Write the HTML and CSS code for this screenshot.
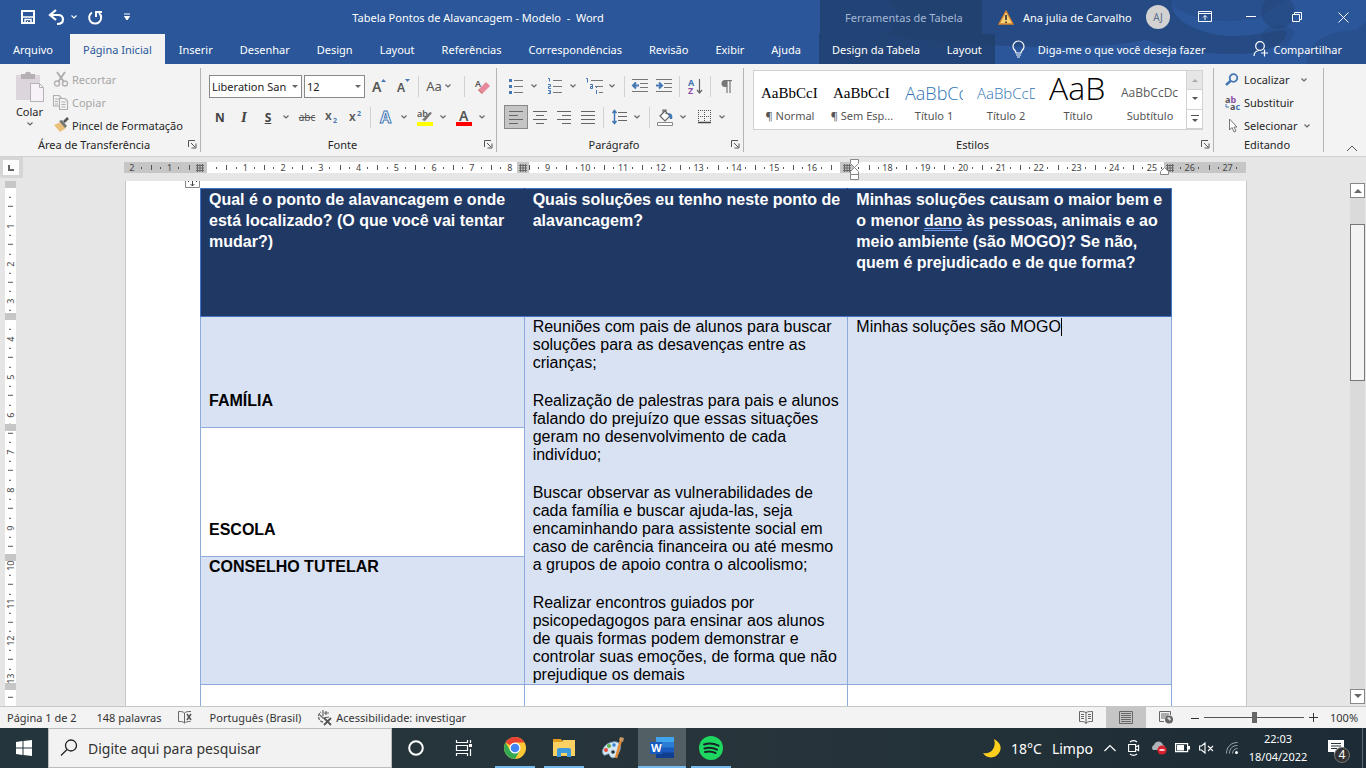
FILE: index.html
```
<!DOCTYPE html>
<html lang="pt-BR">
<head>
    <meta charset="UTF-8">
    <meta name="viewport" content="width=device-width, initial-scale=1.0">
    <title>Tabela Pontos de Alavancagem - Modelo - Word</title>
    <link rel="stylesheet" href="styles.css">
</head>
<body>
    <svg class="defs" aria-hidden="true">
        <symbol id="chev" viewBox="0 0 12 8"><path d="M3.5 2.500 6 5l2.500-2.500" fill="none" stroke="currentColor" stroke-width="1.200"/></symbol>
        <symbol id="launch" viewBox="0 0 9 9"><path d="M.5 7V.500H7M3 3l4 4M8 3.500V8H3.500" fill="none" stroke="#555"/></symbol>
        <symbol id="grid" viewBox="0 0 8 8"><path d="M1.500 0v8M4 0v8M6.500 0v8M0 1.500h8M0 4h8M0 6.500h8" stroke="#666" fill="none"/></symbol>
    </svg>

    <!-- Barra de título e guias -->
    <header class="header">
        <svg class="art" viewBox="0 0 500 64" preserveAspectRatio="none" aria-hidden="true">
            <path d="M20 0h285c0 20 20 28 42 34 28 6 60-4 73-4 4 10-14 25-55 24-35 0-60-6-85-14-60 12-150 8-260-4 10-8 18-26 0-36z" fill="#234273" opacity=".55"/>
            <circle cx="412" cy="12" r="17" fill="#234273" opacity=".45"/>
            <path d="M300 0h120l-28 18c-40 8-75 0-92-18zM395 34c6-12 30-12 34 0l-8 12h-20zM440 64c0-20 20-34 50-34l10-8v42z" fill="#234273" opacity=".3"/>
        </svg>
        <div class="titlebar">
            <div class="quick">
                <button aria-label="Salvar"><svg width="14" height="14" viewBox="0 0 14 14"><path d="M1 1h12v12H1z" fill="none" stroke="#fff" stroke-width="2"/><path d="M1 7h12M4 13V9.500h6V13" stroke="#fff" stroke-width="1.500" fill="none"/><path d="M6 11h1v3H6z" fill="#fff"/></svg></button>
                <button class="undo" aria-label="Desfazer"><svg width="16" height="15" viewBox="0 0 16 15"><path d="M7 0 1 5l6 5M2 5h7c4 0 5 2 5 4.500S12 14 8 14" fill="none" stroke="#fff" stroke-width="2.200"/></svg><svg width="12" height="8"><use href="#chev"/></svg></button>
                <button aria-label="Repetir"><svg width="15" height="15" viewBox="0 0 15 15"><path d="M4 2.500A6 6 0 1 0 11 3M8 7V2h6" fill="none" stroke="#fff" stroke-width="2"/></svg></button>
                <button aria-label="Personalizar"><svg width="8" height="8" viewBox="0 0 8 8"><path d="M1 1h6M1.500 3.500h5L4 7z" stroke="#fff" fill="#fff"/></svg></button>
            </div>
            <div class="title">Tabela Pontos de Alavancagem - Modelo&nbsp; -&nbsp; Word</div>
            <div class="context-title">Ferramentas de Tabela</div>
            <div class="account">
                <svg width="16" height="15" viewBox="0 0 16 15"><path d="M8 1 15 14H1z" fill="#f7d277" stroke="#d9822b" stroke-width="1.300"/><path d="M8 5v5M8 11.500V13" stroke="#222" stroke-width="1.500"/></svg>
                <span class="user">Ana julia de Carvalho</span>
                <span class="avatar">AJ</span>
            </div>
            <div class="window">
                <button aria-label="Opções da faixa"><svg width="14" height="12" viewBox="0 0 14 12"><path d="M.5.500h13v10H.500zM.5 2.500h13M7 9V4.500M5 6.500l2-2 2 2" fill="none" stroke="#fff"/></svg></button>
                <button aria-label="Minimizar"><svg width="10" height="10"><path d="M0 4.500h10" stroke="#fff"/></svg></button>
                <button aria-label="Restaurar"><svg width="10" height="10"><path d="M.5 2.500h7v7h-7zM2.500 2.500v-2h7v7h-2" fill="none" stroke="#fff"/></svg></button>
                <button aria-label="Fechar"><svg width="11" height="11"><path d="m.5.500 10 10m0-10-10 10" stroke="#fff"/></svg></button>
            </div>
        </div>
        <nav class="tabs">
            <button class="tab file">Arquivo</button>
            <button class="tab active">Página Inicial</button>
            <button class="tab">Inserir</button>
            <button class="tab">Desenhar</button>
            <button class="tab">Design</button>
            <button class="tab">Layout</button>
            <button class="tab">Referências</button>
            <button class="tab">Correspondências</button>
            <button class="tab">Revisão</button>
            <button class="tab">Exibir</button>
            <button class="tab">Ajuda</button>
            <div class="context-tabs">
                <button class="tab">Design da Tabela</button>
                <button class="tab">Layout</button>
            </div>
            <button class="tell"><svg width="13" height="17" viewBox="0 0 13 17"><path d="M4 12c0-3-3-3-3-6.500a5.500 5.500 0 0 1 11 0C12 9 9 9 9 12zM4 14h5M5 16h3" fill="none" stroke="#fff" stroke-width="1.200"/></svg>Diga-me o que você deseja fazer</button>
            <button class="share"><svg width="16" height="16" viewBox="0 0 16 16"><circle cx="7" cy="5" r="4.300" fill="none" stroke="#fff" stroke-width="1.200"/><path d="M1 15c0-3 2-5 5-5.500M11.500 8.500v7M8 12h7" fill="none" stroke="#fff" stroke-width="1.200"/></svg>Compartilhar</button>
        </nav>
    </header>

    <!-- Faixa de opções -->
    <section class="ribbon">
        <div class="group clipboard">
            <div class="group-body">
                <button class="paste">
                    <svg width="30" height="31" viewBox="0 0 30 31"><path d="M1 3h24v25H1z" fill="#dcd6dc"/><path d="M6 2h4c0-3 6-3 6 0h4v5H6z" fill="#b5b1b5"/><path d="M15.500 11.500h9l4 4v14h-13z" fill="#f7f1f8" stroke="#b5b1b5"/><path d="M24.500 11.500v4h4" fill="none" stroke="#b5b1b5"/></svg>
                    Colar
                    <svg width="12" height="8"><use href="#chev"/></svg>
                </button>
                <div class="stack">
                    <button class="line" disabled><svg width="16" height="15" viewBox="0 0 16 15"><path d="m4 0 7 10M12 0 5 10" stroke="#aaa" stroke-width="1.800"/><circle cx="4" cy="11.500" r="2.500" fill="none" stroke="#b5b1b5" stroke-width="1.400"/><circle cx="12" cy="11.500" r="2.500" fill="none" stroke="#b5b1b5" stroke-width="1.400"/></svg>Recortar</button>
                    <button class="line" disabled><svg width="16" height="15" viewBox="0 0 16 15"><path d="M6 11H.500V.500H6L8.500 3M2 4h4M2 6.500h3M2 9h3M6.500 3.500H12L14.500 6v8.500h-8zM8.500 7h4M8.500 9.500h4M8.500 12h4" fill="none" stroke="#b0aeb0" stroke-width="1.100"/></svg>Copiar</button>
                    <button class="line"><svg width="16" height="15" viewBox="0 0 16 15"><path d="m1 7 7-3 5 6-6 4z" fill="#ebc07a"/><path d="m6 3 3-1 5 6-2 2z" fill="#777"/><path d="m11 4 4-4" stroke="#555" stroke-width="2.500"/></svg>Pincel de Formatação</button>
                </div>
            </div>
            <div class="group-foot"><span>Área de Transferência</span><button aria-label="Abrir área de transferência"><svg width="9" height="9"><use href="#launch"/></svg></button></div>
        </div>

        <div class="group font">
            <div class="group-body rows">
                <div class="row">
                    <span class="combo family"><select aria-label="Fonte"><option>Liberation San</option></select></span>
                    <span class="combo size"><select aria-label="Tamanho"><option>12</option></select></span>
                    <button class="tool" aria-label="Aumentar"><svg width="16" height="16" viewBox="0 0 16 16"><text x="1" y="14" class="glyph big">A</text><path d="m10 4 2.500-3L15 4z" fill="#4478b4"/></svg></button>
                    <button class="tool" aria-label="Diminuir"><svg width="16" height="16" viewBox="0 0 16 16"><text x="2" y="14" class="glyph">A</text><path d="m10 1 2.500 3L15 1z" fill="#4478b4"/></svg></button>
                    <i class="sep"></i>
                    <button class="tool split case">Aa<svg width="12" height="8"><use href="#chev"/></svg></button>
                    <i class="sep"></i>
                    <button class="tool eraser" aria-label="Limpar"><svg width="16" height="16" viewBox="0 0 16 16"><text x="0" y="9" class="glyph small">A</text><path d="m4 11 7-7 4 4-7 7z" fill="#e8889b"/><path d="m3.500 11.500 4 4" stroke="#c66" stroke-width="1.500"/></svg></button>
                </div>
                <div class="row">
                    <button class="tool letter bold">N</button>
                    <button class="tool letter italic">I</button>
                    <button class="tool split letter bold"><span class="under">S</span><svg width="12" height="8"><use href="#chev"/></svg></button>
                    <button class="tool strike">abc</button>
                    <button class="tool" aria-label="Subscrito"><svg width="14" height="16" viewBox="0 0 14 16"><text x="1" y="11" class="glyph">x</text><text x="9" y="14" class="tiny">2</text></svg></button>
                    <button class="tool" aria-label="Sobrescrito"><svg width="14" height="16" viewBox="0 0 14 16"><text x="1" y="12" class="glyph">x</text><text x="9" y="7" class="tiny">2</text></svg></button>
                    <i class="sep"></i>
                    <button class="tool split" aria-label="Efeitos"><span class="pic"><svg width="14" height="16" viewBox="0 0 14 16"><text x="1" y="14" class="fx">A</text></svg></span><svg width="12" height="8"><use href="#chev"/></svg></button>
                    <button class="tool split" aria-label="Realce"><span class="pic"><svg width="17" height="17" viewBox="0 0 17 17"><text x="0" y="8" class="glyph small">ab</text><path d="m5 11 8-8 2 1-7 8z" fill="#777"/><path d="M0 13h16v4H0z" fill="#ff0"/></svg></span><svg width="12" height="8"><use href="#chev"/></svg></button>
                    <button class="tool split" aria-label="Cor da fonte"><span class="pic"><svg width="17" height="17" viewBox="0 0 17 17"><text x="3" y="12" class="glyph big">A</text><path d="M0 13h16v4H0z" fill="red"/></svg></span><svg width="12" height="8"><use href="#chev"/></svg></button>
                </div>
            </div>
            <div class="group-foot"><span>Fonte</span><button aria-label="Abrir fonte"><svg width="9" height="9"><use href="#launch"/></svg></button></div>
        </div>

        <div class="group paragraph">
            <div class="group-body rows">
                <div class="row">
                    <button class="tool split" aria-label="Marcadores"><span class="pic"><svg width="15" height="16"><path d="M5 2.500h9M5 8.500h9M5 14.500h9" stroke="#777"/><path d="M0 1h3v3H0zM0 7h3v3H0zM0 13h3v3H0z" fill="#4478b4"/></svg></span><svg width="12" height="8"><use href="#chev"/></svg></button>
                    <button class="tool split" aria-label="Numeração"><span class="pic"><svg width="15" height="16"><path d="M5 2.500h9M5 8.500h9M5 14.500h9" stroke="#777"/><path d="M0 .500h1.500v3M0 6.500h2.500v2H.500v2H3M0 12.500h2.500v3H0M1 14h1.500" stroke="#4478b4" fill="none"/></svg></span><svg width="12" height="8"><use href="#chev"/></svg></button>
                    <button class="tool split" aria-label="Vários níveis"><span class="pic"><svg width="17" height="16"><path d="M5 2.500h12M9 8.500h8M13 14.500h4" stroke="#777"/><path d="M0 .500h1.500v4M4 6.500h2.500v4H4.500v-2H6M10.500 9v1M10.500 12v4" stroke="#4478b4" fill="none"/></svg></span><svg width="12" height="8"><use href="#chev"/></svg></button>
                    <i class="sep"></i>
                    <button class="tool" aria-label="Diminuir recuo"><svg width="16" height="14"><path d="M0 .500h16M8 4.500h8M8 8.500h8M0 12.500h16" stroke="#777"/><path d="M7 6.500H1M4 3.500l-3 3 3 3" stroke="#4478b4" stroke-width="2" fill="none"/></svg></button>
                    <button class="tool" aria-label="Aumentar recuo"><svg width="16" height="14"><path d="M0 .500h16M8 4.500h8M8 8.500h8M0 12.500h16" stroke="#777"/><path d="M0 6.500h6M3 3.500l3 3-3 3" stroke="#4478b4" stroke-width="2" fill="none"/></svg></button>
                    <i class="sep"></i>
                    <button class="tool" aria-label="Classificar"><svg width="15" height="17" viewBox="0 0 15 17"><text x="0" y="8" class="sort-a">A</text><text x="0" y="16" class="sort-z">Z</text><path d="M11.500 1v14M9 12l2.500 3 2.500-3" stroke="#666" stroke-width="1.200" fill="none"/></svg></button>
                    <i class="sep"></i>
                    <button class="tool" aria-label="Mostrar tudo"><svg width="11" height="13" viewBox="0 0 11 13"><path d="M6 0H4a3.500 3.500 0 0 0 0 7h2z" fill="#777"/><path d="M4 .600h7M6 0v13M9 0v13" stroke="#777" stroke-width="1.200"/></svg></button>
                </div>
                <div class="row">
                    <button class="tool on" aria-label="Esquerda"><svg width="14" height="13"><path d="M0 .500h14M0 4.500h9M0 8.500h14M0 12.500h9" stroke="#666"/></svg></button>
                    <button class="tool" aria-label="Centro"><svg width="14" height="13"><path d="M0 .500h14M3 4.500h8M0 8.500h14M3 12.500h8" stroke="#666"/></svg></button>
                    <button class="tool" aria-label="Direita"><svg width="14" height="13"><path d="M0 .500h14M5 4.500h9M0 8.500h14M5 12.500h9" stroke="#666"/></svg></button>
                    <button class="tool" aria-label="Justificar"><svg width="14" height="13"><path d="M0 .500h14M0 4.500h14M0 8.500h14M0 12.500h14" stroke="#666"/></svg></button>
                    <i class="sep"></i>
                    <button class="tool split" aria-label="Espaçamento"><span class="pic"><svg width="15" height="16"><path d="M6 3.500h9M6 7.500h9M6 11.500h9" stroke="#666"/><path d="M2.500 1v14M.500 4l2-2.500 2 2.500M.500 12l2 2.500 2-2.500" stroke="#4478b4" stroke-width="1.500" fill="none"/></svg></span><svg width="12" height="8"><use href="#chev"/></svg></button>
                    <i class="sep"></i>
                    <button class="tool split" aria-label="Sombreamento"><span class="pic"><svg width="17" height="17"><path d="m3 7 5-5 5 5-5 5zM6 5V1h3v4" fill="#fff" stroke="#666" stroke-width="1.200"/><path d="M11 4c4 0 5 3 4 6h-2z" fill="#4478b4"/><path d="M.5 13.500h15v3H.500z" fill="#fff" stroke="#888"/></svg></span><svg width="12" height="8"><use href="#chev"/></svg></button>
                    <button class="tool split" aria-label="Bordas"><span class="pic"><svg width="13" height="14"><path d="M0 .500h13M0 6.500h13M.5 0v12M6.500 0v12M12.500 0v12" stroke="#555" stroke-dasharray="1 1"/><path d="M0 12.500h13" stroke="#444" stroke-width="1.500"/></svg></span><svg width="12" height="8"><use href="#chev"/></svg></button>
                </div>
            </div>
            <div class="group-foot"><span>Parágrafo</span><button aria-label="Abrir parágrafo"><svg width="9" height="9"><use href="#launch"/></svg></button></div>
        </div>

        <div class="group styles">
            <div class="group-body">
                <div class="gallery">
                    <button class="style"><span class="preview serif">AaBbCcI</span>¶ Normal</button>
                    <button class="style"><span class="preview serif">AaBbCcI</span>¶ Sem Esp...</button>
                    <button class="style"><span class="preview h1">AaBbCc</span>Título 1</button>
                    <button class="style"><span class="preview h2">AaBbCcD</span>Título 2</button>
                    <button class="style"><span class="preview main">AaB</span>Título</button>
                    <button class="style"><span class="preview sub">AaBbCcDc</span>Subtítulo</button>
                    <div class="gallery-nav">
                        <button class="dim" aria-label="Acima"><svg width="6" height="4"><path d="m0 4 3-3 3 3z" fill="#aaa"/></svg></button>
                        <button aria-label="Abaixo"><svg width="6" height="4"><path d="m0 0 3 3 3-3z" fill="#555"/></svg></button>
                        <button aria-label="Mais"><svg width="8" height="8"><path d="M0 .500h8" stroke="#555"/><path d="m1 4 3 3 3-3z" fill="#555"/></svg></button>
                    </div>
                </div>
            </div>
            <div class="group-foot"><span>Estilos</span><button aria-label="Abrir estilos"><svg width="9" height="9"><use href="#launch"/></svg></button></div>
        </div>

        <div class="group editing">
            <div class="group-body">
                <div class="stack">
                    <button class="line"><svg width="14" height="13"><circle cx="8.500" cy="5" r="3.800" fill="none" stroke="#4478b4" stroke-width="1.800"/><path d="M6 7.500 1 12" stroke="#4478b4" stroke-width="2.500"/></svg>Localizar<svg class="far" width="12" height="8"><use href="#chev"/></svg></button>
                    <button class="line"><svg width="16" height="16" viewBox="0 0 16 16"><text x="0" y="8" class="ab">a<tspan fill="#8f4fa8">b</tspan></text><text x="5" y="15" class="ab">a<tspan fill="#4478b4">c</tspan></text><path d="M1 9v3h3" stroke="#4478b4" fill="none"/></svg>Substituir</button>
                    <button class="line"><svg width="14" height="15"><path d="M4.500 1v11l2.500-2.500 2 4.500 2-1-2-4h3z" fill="#fff" stroke="#777"/></svg>Selecionar<svg width="12" height="8"><use href="#chev"/></svg></button>
                </div>
            </div>
            <div class="group-foot"><span>Editando</span></div>
        </div>
        <button class="collapse" aria-label="Recolher"><svg width="12" height="7"><path d="m1 6 5-5 5 5" fill="none" stroke="#555"/></svg></button>
    </section>

    <!-- Documento -->
    <main class="workspace">
        <div class="ruler-bar">
            <div class="corner"><span><svg width="6" height="6"><path d="M1 0v5h5" fill="none" stroke="#666" stroke-width="2"/></svg></span></div>
            <div class="ruler">
                <ol>
                    <li>2</li><li>1</li><li></li><li>1</li><li>2</li><li>3</li><li>4</li><li>5</li><li>6</li><li>7</li>
                    <li>8</li><li>9</li><li>10</li><li>11</li><li>12</li><li>13</li><li>14</li><li>15</li><li>16</li><li></li>
                    <li>18</li><li>19</li><li>20</li><li>21</li><li>22</li><li>23</li><li>24</li><li>25</li><li>26</li><li>27</li>
                </ol>
                <span class="stop stop-0"><svg width="8" height="8"><use href="#grid"/></svg></span>
                <span class="stop stop-1"><svg width="8" height="8"><use href="#grid"/></svg></span>
                <span class="stop stop-2"><svg width="8" height="8"><use href="#grid"/></svg></span>
                <span class="stop stop-3"><svg width="8" height="8"><use href="#grid"/></svg></span>
                <svg class="indent indent-left" width="9" height="22"><path d="M.5.500h8v4l-4 4-4-4zM4.500 8.500l4 4v3h-8v-3zM.5 15.500h8v5h-8z" fill="#fff" stroke="#888"/></svg>
                <svg class="indent indent-right" width="9" height="9"><path d="m4.500.500 4 4v3h-8v-3z" fill="#fff" stroke="#888"/></svg>
            </div>
        </div>
        <div class="canvas">
            <div class="vruler">
                <ol>
                    <li></li><li>1</li><li>2</li><li>3</li><li>4</li><li>5</li><li>6</li><li>7</li>
                    <li>8</li><li>9</li><li>10</li><li>11</li><li>12</li><li>13</li><li></li>
                </ol>
                <span class="rowmark mark-0"></span>
                <span class="rowmark mark-1"></span>
                <span class="rowmark mark-2"></span>
                <span class="rowmark mark-3"></span>
                <span class="rowmark mark-4"></span>
            </div>
            <article class="page">
                <svg class="handle" width="15" height="7"><path d="M.500-7.500h14v14h-14z" fill="#fff" stroke="#888"/><path d="M7.500 0v5M5.500 3l2 2 2-2M3.500 0v1M11.500 0v1" fill="none" stroke="#444"/></svg>
                <table>
                    <thead>
                        <tr>
                            <th>Qual é o ponto de alavancagem e onde está localizado? (O que você vai tentar mudar?)</th>
                            <th>Quais soluções eu tenho neste ponto de alavancagem?</th>
                            <th>Minhas soluções causam o maior bem e o menor <span class="grammar">dano</span> às pessoas, animais e ao meio ambiente (são MOGO)? Se não, quem é prejudicado e de que forma?</th>
                        </tr>
                    </thead>
                    <tbody>
                        <tr class="family-row">
                            <td class="name low">FAMÍLIA</td>
                            <td rowspan="3">
                                <p>Reuniões com pais de alunos para buscar soluções para as desavenças entre as crianças;</p>
                                <p>Realização de palestras para pais e alunos falando do prejuízo que essas situações geram no desenvolvimento de cada indivíduo;</p>
                                <p>Buscar observar as vulnerabilidades de cada família e buscar ajuda-las, seja encaminhando para assistente social em caso de carência financeira ou até mesmo a grupos de apoio contra o alcoolismo;</p>
                                <p>Realizar encontros guiados por psicopedagogos para ensinar aos alunos de quais formas podem demonstrar e controlar suas emoções, de forma que não prejudique os demais</p>
                            </td>
                            <td rowspan="3">Minhas soluções são MOGO<span class="caret"></span></td>
                        </tr>
                        <tr class="school-row"><td class="name low plain">ESCOLA</td></tr>
                        <tr class="council-row"><td class="name">CONSELHO TUTELAR</td></tr>
                        <tr class="empty-row"><td class="plain"></td><td class="plain"></td><td class="plain"></td></tr>
                    </tbody>
                </table>
            </article>
            <div class="scroll">
                <button aria-label="Rolar para cima"><svg width="8" height="5"><path d="m0 5 4-4 4 4z" fill="#666"/></svg></button>
                <div class="thumb"></div>
                <button aria-label="Rolar para baixo"><svg width="8" height="5"><path d="m0 0 4 4 4-4z" fill="#666"/></svg></button>
            </div>
        </div>
    </main>

    <!-- Barra de status -->
    <footer class="status">
        <span class="pages">Página 1 de 2</span>
        <span class="words">148 palavras</span>
        <svg class="proof" width="16" height="13"><path d="M6.500 2C5 .500 3 .500.500.500v10c2.500 0 4.500 0 6 1.500zM6.500 2C8 .500 10 .500 13 .500M6.500 12c1-1 3-1.500 6-1.500" fill="none" stroke="#666"/><path d="m9 3 4 6m0-6-4 6" stroke="#555" stroke-width="1.500"/></svg>
        <span class="lang">Português (Brasil)</span>
        <svg class="access" width="17" height="16"><path d="M7 12A5.500 5.500 0 0 1 5 2" fill="none" stroke="#666" stroke-width="1.400" stroke-dasharray="3 1"/><path d="M7 0v6M4 5l3 3 6-1M10 1v4M8 3h5" stroke="#666" fill="none" stroke-width="1.200"/><path d="m8 8 7 7m0-7-7 7" stroke="#555" stroke-width="1.800"/></svg>
        <span>Acessibilidade: investigar</span>
        <div class="views">
            <button aria-label="Modo de leitura"><svg width="14" height="13"><path d="M7 1.500C5 .500 3 .500.500.500v10c3 0 5 0 6.500 1.500 1.500-1.500 3.500-1.500 6.500-1.500V.500C11 .500 9 .500 7 1.500zM7 1v12M2 3.500h3M2 5.500h3M2 7.500h3M9 3.500h3M9 5.500h3M9 7.500h3" fill="none" stroke="#666"/></svg></button>
            <button class="on" aria-label="Layout de impressão"><svg width="14" height="13"><path d="M.5.500h13v12H.500zM2 2.500h10M2 4.500h10M2 6.500h10M2 8.500h10M2 10.500h10" fill="none" stroke="#666"/></svg></button>
            <button aria-label="Layout da Web"><svg width="15" height="13"><path d="M5 10.500H.500V.500h11V4M2 3h8M2 5h7M2 7h4" fill="none" stroke="#666"/><circle cx="10" cy="8.500" r="4" fill="#666"/><path d="m8 7 2-1 2 2-1 2z" fill="#ddd"/></svg></button>
        </div>
        <div class="zoom">
            <button aria-label="Menos zoom"><svg width="8" height="8"><path d="M0 4.500h8" stroke="#333"/></svg></button>
            <input type="range" min="0" max="100" value="50" aria-label="Zoom">
            <button aria-label="Mais zoom"><svg width="9" height="9"><path d="M0 4.500h9M4.500 0v9" stroke="#333"/></svg></button>
        </div>
        <span class="percent">100%</span>
    </footer>

    <!-- Barra de tarefas -->
    <div class="taskbar">
        <button class="app start" aria-label="Iniciar"><svg width="16" height="16"><path d="m0 2 6.500-1v6.500H0zM7.500 1 16 0v7.500H7.500zM0 8.500h6.500V15L0 14zM7.500 8.500H16V16l-8.500-1z" fill="#fff"/></svg></button>
        <label class="search">
            <svg width="18" height="18"><circle cx="11" cy="6.500" r="5.500" fill="none" stroke="#222" stroke-width="1.300"/><path d="M7 10.500 1 16.500" stroke="#222" stroke-width="1.300"/></svg>
            <input type="text" placeholder="Digite aqui para pesquisar" aria-label="Pesquisar">
        </label>
        <button class="app" aria-label="Cortana"><svg width="16" height="16"><circle cx="8" cy="8" r="6.800" fill="none" stroke="#fff" stroke-width="2"/></svg></button>
        <button class="app" aria-label="Visão de tarefas"><svg width="17" height="16"><path d="M.5 0v2.500h11V0M.5 5.500h11v5H.500zM.5 16v-2.500h11V16M14.500 0v3M14.500 9v7" fill="none" stroke="#fff" stroke-width="1.200"/><path d="M13 4h3v3h-3z" fill="#fff"/></svg></button>
        <div class="pinned">
            <button class="app open" aria-label="Chrome"><svg width="22" height="22" viewBox="0 0 22 22"><circle cx="11" cy="11" r="11" fill="#fcc934"/><path d="M11 11 1.500 5.500A11 11 0 0 1 20.500 5.500H11z" fill="#ea4335"/><path d="M1.500 5.500A11 11 0 0 0 11 22l4.700-8.300L6.300 13.700z" fill="#34a853"/><circle cx="11" cy="11" r="5.500" fill="#fff"/><circle cx="11" cy="11" r="4.300" fill="#4285f4"/></svg></button>
            <button class="app open" aria-label="Explorador"><svg width="22" height="20"><path d="M0 1h8l2 3H0z" fill="#e09d1c"/><path d="M0 4h9l1-2h12v16H0z" fill="#fbd163"/><path d="M4 19v-7q0-2 2-2h10q2 0 2 2v7h-4v-4H8v4z" fill="#3d9bdc"/></svg></button>
            <button class="app" aria-label="Paint"><svg width="24" height="24"><path d="M3 19C-1 15 4 7 12 6c7-1 9 4 6 10-2 5-6 7-8 5-2-1-1-4-3-3-2 0-3 2-4 1z" fill="#d5e7f3" stroke="#7fa9c5"/><circle cx="5" cy="14" r="2" fill="#e14b3b"/><circle cx="8" cy="10" r="2" fill="#5fae45"/><circle cx="13" cy="9" r="1.800" fill="#3a84d0"/><circle cx="12" cy="16" r="1.800" fill="#243038"/><path d="M20 4 15 22" stroke="#e48a35" stroke-width="2.500"/><path d="m18 4 1-3 4 1-1 4z" fill="#c79a6a"/></svg></button>
            <button class="app current" aria-label="Word"><svg width="24" height="21" viewBox="0 0 24 21"><path d="M6 0h18v6H6z" fill="#41a5ee"/><path d="M6 5h18v6H6z" fill="#2b7cd3"/><path d="M6 10.500h18V16H6z" fill="#185abd"/><path d="M6 15.500h18V21H6z" fill="#103f91"/><path d="M0 5h12v12H0z" fill="#185abd"/><text x="1" y="15" class="word-w">W</text></svg></button>
            <button class="app open" aria-label="Spotify"><svg width="24" height="24"><circle cx="12" cy="12" r="12" fill="#1ed760"/><path d="M5 8.500c5-1.500 10-1 14.500 1.200M5.500 12.500c4.500-1.200 8.500-.8 12.500 1.200M6 16c4-1 7-.6 10.500 1" fill="none" stroke="#16242a" stroke-width="2" stroke-linecap="round"/></svg></button>
        </div>
        <div class="tray">
            <button class="weather"><svg width="18" height="19"><path d="M11 0c8 4 9 12 2 17-5 3-11 1-13-3 7 2 14-5 11-14z" fill="#fccf1d"/></svg><span>18°C</span><span>Limpo</span></button>
            <button class="icon" aria-label="Ícones ocultos"><svg width="12" height="8"><path d="m.5 7 5.500-5.500L11.500 7" fill="none" stroke="#fff" stroke-width="1.200"/></svg></button>
            <button class="icon" aria-label="Câmera"><svg width="12" height="16"><path d="M.6 4.500h7v7h-7zM7.600 7l3-1.500v5l-3-1.500M2 2c2-1.500 5-1.500 7 0M2 14c2 1.500 5 1.500 7 0" fill="none" stroke="#fff" stroke-width="1.100"/></svg></button>
            <button class="icon" aria-label="OneDrive"><svg width="17" height="14"><path d="M3 9a3 3 0 0 1 1-5c2-5 8-4 9 0 3 1 2 5 0 5z" fill="#aeb4b8"/><circle cx="12" cy="9" r="4.600" fill="#d9202e"/><path d="M9.500 9h5" stroke="#fff" stroke-width="1.500"/></svg></button>
            <button class="icon" aria-label="Bateria"><svg width="15" height="10"><path d="M.6.600h12v8H.600z" fill="none" stroke="#fff" stroke-width="1.200"/><path d="M2 2h7v5.500H2zM13 3h2v3.500h-2z" fill="#fff"/></svg></button>
            <button class="icon" aria-label="Volume"><svg width="15" height="12"><path d="M.6 4v4h2L6 11V1L2.600 4zM9 4l5 5m0-5L9 9" fill="none" stroke="#fff" stroke-width="1.100"/></svg></button>
            <button class="icon wifi" aria-label="Rede"><svg width="12" height="12"><path d="M.5 11.500C.500 5 5 .500 11.500.500M3.500 11.500c0-5 3-8 8-8M6.500 11.500c0-3 2-5 5-5" fill="none" stroke="#9aa5ab"/><circle cx="10.500" cy="10.500" r="1.500" fill="#fff"/></svg></button>
            <button class="clock"><time>22:03</time><span>18/04/2022</span></button>
            <button class="notes" aria-label="Notificações"><svg width="17" height="17"><path d="M0 0h16v12H9l-3 4v-4H0z" fill="#fff"/><path d="M3 3.500h10M3 6h10M3 8.500h6" stroke="#263238"/></svg><span class="badge">4</span></button>
        </div>
    </div>
</body>
</html>
```
FILE: styles.css
```
* {
    box-sizing: border-box;
}
body {
    margin: 0;
    height: 100vh;
    display: flex;
    flex-direction: column;
    overflow: hidden;
    font-family: "Noto Sans", "Open Sans", sans-serif;
    font-size: 11px;
    color: #262626;
    background-color: #e6e6e6;
}
button {
    border: 0;
    padding: 0;
    background: none;
    font: inherit;
    color: inherit;
    white-space: nowrap;
    display: flex;
    align-items: center;
    justify-content: center;
}
svg {
    display: block;
    flex: none;
    overflow: visible;
}
.defs {
    position: absolute;
    width: 0;
    height: 0;
}

/* Cabeçalho */
.header {
    position: relative;
    background-color: #2b579a;
    color: #fff;
}
.art {
    position: absolute;
    right: 0;
    top: 0;
    width: 500px;
    height: 100%;
    overflow: hidden;
}
.titlebar, .tabs {
    position: relative;
    display: flex;
}
.titlebar {
    height: 34px;
    align-items: center;
}
.quick {
    width: 136px;
    padding-left: 21px;
    display: flex;
    align-items: center;
}
.quick button {
    margin-right: 14px;
}
.quick .undo {
    gap: 3px;
    margin-right: 8px;
}
.quick button:last-child {
    margin: 0 0 0 6px;
}
.title {
    flex: 1;
    text-align: center;
}
.context-title {
    width: 162px;
    align-self: stretch;
    display: flex;
    align-items: center;
    padding-left: 25px;
    background-color: rgba(33, 62, 108, 0.8);
    color: #a5b8d4;
}
.account {
    width: 200px;
    padding-left: 16px;
    display: flex;
    align-items: center;
}
.user {
    flex: 1;
    padding-left: 9px;
}
.avatar {
    width: 24px;
    height: 24px;
    margin-right: 12px;
    border-radius: 50%;
    background-color: #d2d2d2;
    color: #5b6f8e;
    font-size: 10px;
    line-height: 24px;
    text-align: center;
}
.window {
    display: flex;
    width: 184px;
}
.window button {
    flex: 1;
    height: 30px;
}
.tabs {
    height: 30px;
    gap: 1px;
}
.tab {
    padding: 0 13px;
}
.file {
    padding-right: 16px;
}
.active {
    background-color: #f3f3f3;
    color: #2b579a;
}
.context-tabs {
    display: flex;
    gap: 1px;
    margin-left: 4px;
    background-color: rgba(33, 62, 108, 0.8);
}
.tell {
    padding-left: 16px;
    gap: 13px;
}
.share {
    margin-left: auto;
    padding-right: 24px;
    gap: 4px;
}

/* Faixa */
.ribbon {
    display: flex;
    height: 93px;
    background-color: #f3f3f3;
    border-bottom: 1px solid #d2d2d2;
}
.group {
    display: flex;
    flex-direction: column;
    margin: 4px 0 4px;
    border-right: 1px solid #b4b4b4;
}
.group-body {
    flex: 1;
    display: flex;
}
.group-foot {
    height: 16px;
    display: flex;
    align-items: center;
    padding-right: 3px;
}
.group-foot span {
    flex: 1;
    text-align: center;
}
.group use {
    color: #666;
}
.clipboard {
    width: 201px;
}
.font {
    width: 296px;
}
.paragraph {
    width: 247px;
}
.styles {
    width: 470px;
}
.editing {
    width: 110px;
}
.collapse {
    margin: auto 8px 4px auto;
}
.paste {
    flex-direction: column;
    justify-content: flex-start;
    width: 53px;
    padding: 4px 0 0 6px;
    gap: 1px;
}
.stack {
    display: flex;
    flex-direction: column;
}
.line {
    height: 23px;
    justify-content: flex-start;
    gap: 3px;
}
.line svg:first-child {
    width: 16px;
}
.line:disabled {
    color: #a6a6a6;
}
.line .far {
    margin-left: 6px;
}
.rows {
    flex-direction: column;
    padding: 6px 0 0 7px;
    gap: 7px;
}
.row {
    display: flex;
    align-items: center;
    height: 24px;
}
.tool {
    width: 24px;
    height: 24px;
    color: #555;
}
.split {
    width: 36px;
    margin-right: 3px;
}
.pic, .under {
    width: 24px;
    display: flex;
    justify-content: center;
}
.on {
    background-color: #c5c5c5;
}
.tool.on {
    border: 1px solid #888;
}
.sep {
    width: 1px;
    height: 21px;
    margin: 0 3px;
    background-color: #d2d2d2;
}
.combo {
    position: relative;
    height: 23px;
    margin-right: 2px;
}
.combo select {
    appearance: none;
    width: 100%;
    height: 100%;
    border: 1px solid #888;
    border-radius: 0;
    padding: 0 12px 0 2px;
    background-color: #fff;
    color: #222;
    font: inherit;
}
.combo::after {
    content: "";
    position: absolute;
    right: 4px;
    top: 10px;
    border: 3px solid transparent;
    border-top-color: #666;
}
.family {
    width: 93px;
    margin-left: 1px;
}
.size {
    width: 61px;
}
.case {
    font-size: 13px;
}
.eraser {
    margin-left: 3px;
}
.letter {
    font-size: 12px;
    color: #444;
}
.bold {
    font-weight: bold;
}
.italic {
    font-family: "Liberation Serif", serif;
    font-style: italic;
    font-weight: bold;
    font-size: 15px;
}
.under {
    text-decoration: underline;
}
.strike {
    text-decoration: line-through;
    font-size: 10px;
}
.glyph {
    font-size: 12px;
    font-weight: 600;
    fill: #555;
}
.big {
    font-size: 14px;
}
.small {
    font-size: 9px;
}
.tiny {
    font-size: 7px;
    font-weight: bold;
    fill: #4478b4;
}
.fx {
    font-size: 16px;
    font-weight: bold;
    fill: #fff;
    stroke: #4478b4;
}
.sort-a, .sort-z, .ab {
    font-size: 9px;
    font-weight: bold;
    fill: #4478b4;
}
.sort-z {
    fill: #8f4fa8;
}
.ab {
    fill: #555;
}
.styles .group-body {
    padding: 2px 9px 0;
}
.gallery {
    display: flex;
    height: 60px;
    border: 1px solid #d2d2d2;
    background-color: #fff;
}
.style {
    width: 72px;
    flex-direction: column;
    justify-content: flex-start;
    padding-top: 7px;
    color: #555;
}
.preview {
    width: 58px;
    height: 30px;
    overflow: hidden;
    text-align: left;
    font-family: "Open Sans", sans-serif;
    font-weight: 300;
    line-height: 30px;
}
.serif {
    font-family: "Liberation Serif", serif;
    font-weight: normal;
    font-size: 15px;
    color: #000;
}
.h1 {
    font-size: 18px;
    color: #2e74b5;
}
.h2 {
    font-size: 15px;
    color: #2e74b5;
}
.main {
    font-size: 32px;
    line-height: 20px;
    color: #000;
}
.sub {
    font-size: 12px;
    font-weight: normal;
    color: #5a5a5a;
}
.gallery-nav {
    width: 16px;
    display: flex;
    flex-direction: column;
    border-left: 1px solid #d2d2d2;
}
.gallery-nav button {
    flex: 1;
    border-bottom: 1px solid #d2d2d2;
}
.gallery-nav .dim {
    background-color: #e6e6e6;
}
.editing .stack {
    padding-left: 11px;
}

/* Réguas */
.workspace {
    flex: 1;
    min-height: 0;
    display: flex;
    flex-direction: column;
}
.ruler-bar {
    height: 24px;
    display: flex;
}
.corner {
    width: 23px;
    height: 21px;
    padding: 3px;
    background-color: #d6d6d6;
}
.corner span {
    display: grid;
    place-items: center;
    width: 16px;
    height: 15px;
    background-color: #fcfcfc;
}
.ruler {
    position: relative;
    width: 1122px;
    height: 11px;
    margin: 5px 120px 0 auto;
    background: linear-gradient(to right, #c6c6c6 83px, #fff 83px, #fff 1040px, #c6c6c6 1040px);
}
.ruler ol, .vruler ol {
    display: flex;
    height: 100%;
    margin: 0;
    padding: 0;
    list-style: none;
    overflow: hidden;
    font-size: 9px;
    color: #444;
}
.ruler li {
    flex: 0 0 1cm;
    line-height: 11px;
    text-align: center;
    background:
        linear-gradient(#555, #555) 0 50% / 1px 5px no-repeat,
        linear-gradient(#555, #555) 25% 50% / 1px 2px no-repeat,
        linear-gradient(#555, #555) 75% 50% / 1px 2px no-repeat;
}
.ruler li:first-child {
    margin-left: -11px;
}
.stop {
    position: absolute;
    top: 0;
    width: 12px;
    height: 11px;
    display: grid;
    place-items: center;
    background-color: #c6c6c6;
}
.stop-0 { left: 70px; }
.stop-1 { left: 393px; }
.stop-2 { left: 716px; width: 14px; }
.stop-3 { left: 1040px; }
.indent {
    position: absolute;
}
.indent-left {
    left: 726px;
    top: -3px;
}
.indent-right {
    left: 1036px;
    top: 5px;
}
.canvas {
    flex: 1;
    min-height: 0;
    display: flex;
}
.vruler {
    position: relative;
    width: 11px;
    margin-left: 5px;
    background-color: #fff;
    overflow: hidden;
}
.vruler ol {
    flex-direction: column;
    margin-top: -12px;
    height: auto;
}
.vruler li {
    flex: 0 0 1cm;
    writing-mode: vertical-rl;
    transform: rotate(180deg);
    line-height: 11px;
    text-align: center;
    background:
        linear-gradient(#555, #555) 50% 0 / 5px 1px no-repeat,
        linear-gradient(#555, #555) 50% 25% / 2px 1px no-repeat,
        linear-gradient(#555, #555) 50% 75% / 2px 1px no-repeat;
}
.rowmark {
    position: absolute;
    left: 0;
    width: 11px;
    height: 7px;
    background-color: #c6c6c6;
}
.mark-0 { top: 0; }
.mark-1 { top: 132px; }
.mark-2 { top: 243px; }
.mark-3 { top: 373px; }
.mark-4 { top: 502px; }

/* Página */
.page {
    position: relative;
    width: 1122px;
    margin: 0 103px 0 auto;
    padding: 7px 74px 0;
    border: solid #c6c6c6;
    border-width: 0 1px;
    background-color: #fff;
    overflow: hidden;
}
.handle {
    position: absolute;
    left: 59px;
    top: 0;
    overflow: hidden;
}
table {
    width: 100%;
    table-layout: fixed;
    border-collapse: collapse;
    font-family: "Liberation Sans", Arial, sans-serif;
    font-size: 16px;
    line-height: 18px;
    color: #000;
}
th, td {
    padding: 0 7px 0 8px;
    text-align: left;
    vertical-align: top;
    border: 1px solid #8eaadb;
    background-color: #d9e2f3;
}
td {
    padding-top: 1px;
}
th {
    height: 128px;
    line-height: 21px;
    color: #fff;
    background-color: #1f3864;
    border-color: #4472c4;
}
th + th {
    border-left-color: #1f3864;
}
th:not(:last-child) {
    border-right-color: #1f3864;
}
.name {
    font-weight: bold;
}
.low {
    vertical-align: bottom;
    padding-bottom: 17px;
}
.plain {
    background-color: #fff;
}
.family-row {
    height: 111px;
}
.school-row {
    height: 129px;
}
.council-row {
    height: 128px;
}
.empty-row {
    height: 60px;
}
td p {
    margin: 0 0 20px;
}
td p:last-child {
    margin: 0;
}
.grammar {
    text-decoration: underline double #6f9bf0;
    text-decoration-thickness: 1px;
    text-underline-offset: 2px;
}
.caret {
    display: inline-block;
    width: 1px;
    height: 18px;
    background-color: #000;
    vertical-align: top;
}
.scroll {
    width: 15px;
    margin: 2px 1px 2px 0;
    display: flex;
    flex-direction: column;
    background-color: #dadada;
}
.scroll button {
    height: 15px;
    border: 1px solid #888;
    background-color: #fff;
}
.thumb {
    height: 157px;
    margin: 26px 0 auto;
    border: 1px solid #777;
    background-color: #f3f3f3;
}

/* Status */
.status {
    height: 22px;
    display: flex;
    align-items: center;
    padding: 0 8px 0 7px;
    border-top: 1px solid #c6c6c6;
    background-color: #f3f3f3;
    color: #333;
}
.pages {
    margin-right: 20px;
}
.words, .proof {
    margin-right: 16px;
}
.lang {
    margin-right: 15px;
}
.access {
    margin-right: 3px;
}
.views {
    display: flex;
    align-self: stretch;
    margin-left: auto;
}
.views button {
    width: 40px;
}
.zoom {
    display: flex;
    align-items: center;
    margin: 0 12px 0 5px;
}
.zoom input {
    appearance: none;
    width: 100px;
    height: 16px;
    margin: 0 5px;
    background: linear-gradient(#555, #555) 0 50% / 100% 1px no-repeat;
}
.zoom input::-webkit-slider-thumb {
    appearance: none;
    width: 5px;
    height: 11px;
    background-color: #666;
}
.percent {
    width: 28px;
}

/* Barra de tarefas */
.taskbar {
    height: 40px;
    display: flex;
    background: linear-gradient(to right, #24353d, #27343a 55%, #1c2b35);
    color: #fff;
}
.app {
    width: 48px;
}
.search {
    width: 344px;
    display: flex;
    align-items: center;
    padding-left: 11px;
    gap: 10px;
    border: 1px solid #bbb;
    background-color: #f2f2f2;
}
.search input {
    flex: 1;
    min-width: 0;
    border: 0;
    padding: 0;
    background: none;
    font-family: "Noto Sans", sans-serif;
    font-size: 14px;
}
.search input::placeholder {
    color: #333;
}
.pinned {
    display: flex;
    gap: 1px;
    margin-left: 3px;
}
.open {
    background: linear-gradient(#76b9ed, #76b9ed) 50% 100% / 40px 2px no-repeat;
}
.current {
    background-color: #526066;
    border-bottom: 2px solid #76b9ed;
}
.tray {
    margin-left: auto;
    display: flex;
}
.weather {
    gap: 10px;
    margin-right: 5px;
    font-size: 14px;
}
.icon {
    width: 24px;
}
.wifi {
    width: 28px;
}
.clock {
    flex-direction: column;
    width: 64px;
    margin-right: 5px;
    gap: 2px;
    line-height: 16px;
}
.notes {
    position: relative;
    width: 48px;
    margin-right: 3px;
    padding-right: 4px;
    border-right: 1px solid #5c686e;
}
.badge {
    position: absolute;
    right: 12px;
    bottom: 5px;
    width: 16px;
    height: 16px;
    border: 1px solid #777;
    border-radius: 50%;
    background-color: #333;
    font-size: 12px;
    line-height: 14px;
    text-align: center;
}
.word-w {
    font-size: 11px;
    font-weight: bold;
    fill: #fff;
}
```
